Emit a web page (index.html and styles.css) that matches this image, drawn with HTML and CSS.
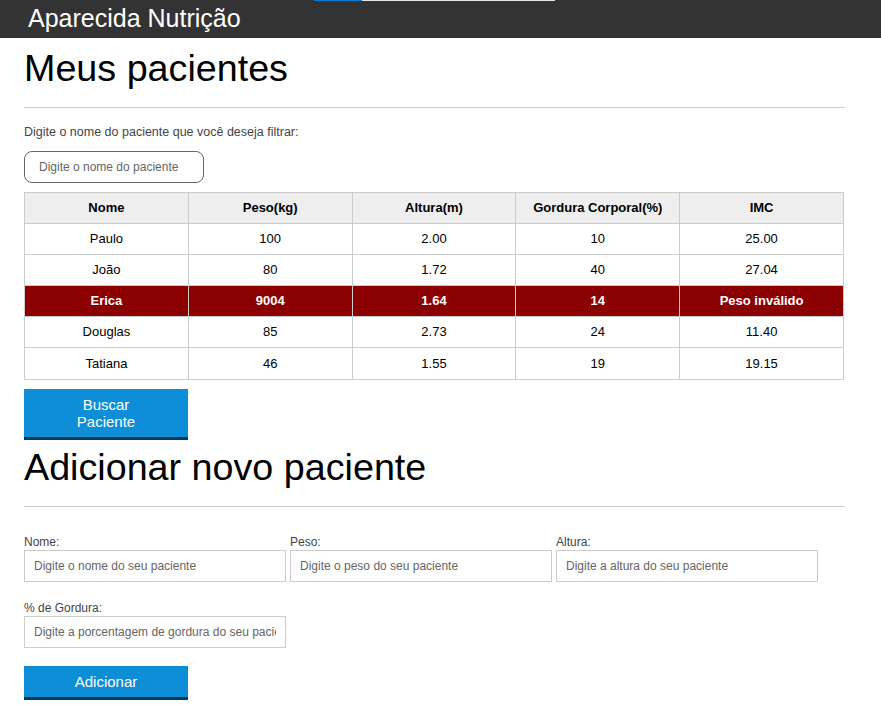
FILE: index.html
```html
<!DOCTYPE html>
<html lang="pt-BR">
<head>
<meta charset="utf-8">
<title>Aparecida Nutrição</title>
<link rel="stylesheet" href="styles.css">
</head>
<body>
<div class="progress"><span class="progress-fill"></span><span class="progress-rest"></span></div>
<header class="topbar">
  <h1 class="brand">Aparecida Nutrição</h1>
</header>
<main class="container">
  <section>
    <h2 class="title">Meus pacientes</h2>
    <hr class="rule">
    <label class="filter-label" for="filtro">Digite o nome do paciente que você deseja filtrar:</label>
    <input id="filtro" class="filter-input" type="text" placeholder="Digite o nome do paciente">
    <table class="patients">
      <thead>
        <tr><th>Nome</th><th>Peso(kg)</th><th>Altura(m)</th><th>Gordura Corporal(%)</th><th>IMC</th></tr>
      </thead>
      <tbody>
        <tr><td>Paulo</td><td>100</td><td>2.00</td><td>10</td><td>25.00</td></tr>
        <tr><td>João</td><td>80</td><td>1.72</td><td>40</td><td>27.04</td></tr>
        <tr class="invalid"><td>Erica</td><td>9004</td><td>1.64</td><td>14</td><td>Peso inválido</td></tr>
        <tr><td>Douglas</td><td>85</td><td>2.73</td><td>24</td><td>11.40</td></tr>
        <tr><td>Tatiana</td><td>46</td><td>1.55</td><td>19</td><td>19.15</td></tr>
      </tbody>
    </table>
    <button class="btn btn-search" type="button">Buscar Paciente</button>
  </section>
  <section>
    <h2 class="title title-add">Adicionar novo paciente</h2>
    <hr class="rule">
    <form class="form">
      <div class="row">
        <div class="field"><label for="nome">Nome:</label><input id="nome" type="text" placeholder="Digite o nome do seu paciente"></div>
        <div class="field"><label for="peso">Peso:</label><input id="peso" type="text" placeholder="Digite o peso do seu paciente"></div>
        <div class="field"><label for="altura">Altura:</label><input id="altura" type="text" placeholder="Digite a altura do seu paciente"></div>
      </div>
      <div class="row row-second">
        <div class="field"><label for="gordura">% de Gordura:</label><input id="gordura" type="text" placeholder="Digite a porcentagem de gordura do seu paciente"></div>
      </div>
      <button class="btn btn-add" type="button">Adicionar</button>
    </form>
  </section>
</main>
</body>
</html>
```
FILE: styles.css
```css
* { box-sizing: border-box; }
html, body { margin: 0; padding: 0; background: #fff; }
body { font-family: "Liberation Sans", Arial, sans-serif; color: #000; }

.progress {
  position: absolute;
  top: 0;
  left: 314px;
  display: flex;
  height: 1px;
  z-index: 2;
}
.progress-fill { width: 48px; background: #0a7ad6; }
.progress-rest { width: 193px; background: #e6e6e6; }

.topbar {
  background: #333;
  height: 38px;
  padding: 0 28px;
}
.brand {
  margin: 0;
  color: #fff;
  font-weight: normal;
  font-size: 25px;
  line-height: 37px;
}

.container {
  width: 820px;
  margin: 0 24px;
}

.title {
  margin: 8px 0 0;
  font-weight: normal;
  font-size: 37.7px;
  line-height: 44px;
}
.title-add { margin-top: 5px; }

.rule {
  border: 0;
  border-top: 1px solid #ccc;
  margin: 17px 0 0;
}

.filter-label {
  display: block;
  margin-top: 17px;
  font-size: 12.5px;
  line-height: 14px;
  color: #444;
}
.filter-input {
  display: block;
  margin-top: 12px;
  width: 180px;
  height: 32px;
  border: 1px solid #666;
  border-radius: 8px;
  padding: 0 14px;
  font-family: inherit;
  font-size: 12px;
}
.filter-input::placeholder { color: #666; }

.patients {
  margin-top: 9px;
  width: 820px;
  border-collapse: collapse;
  table-layout: fixed;
  font-size: 13px;
}
.patients th, .patients td {
  border: 1px solid #ccc;
  height: 31.1px;
  padding: 0 4px;
  text-align: center;
  line-height: 16px;
}
.patients th { background: #eee; font-weight: bold; }
.patients tr.invalid td { background: #8b0000; color: #fff; font-weight: bold; }

.btn {
  display: block;
  width: 164px;
  border: 0;
  border-bottom: 3px solid #003a5c;
  background: #0d8ed6;
  color: #fff;
  font-family: inherit;
  font-size: 15px;
  line-height: 17px;
  padding: 0 30px;
  cursor: pointer;
}
.btn-search { margin-top: 9px; height: 51px; padding-top: 1px; }
.btn-add { margin-top: 18px; height: 34px; }

.form { margin-top: 28px; }
.row { display: flex; gap: 4px; }
.row-second { margin-top: 19px; }
.field { display: flex; flex-direction: column; width: 262px; }
.field label { font-size: 12px; line-height: 14px; color: #444; margin-bottom: 1px; }
.field input {
  height: 32px;
  border: 1px solid #ccc;
  padding: 0 9px;
  font-family: inherit;
  font-size: 12px;
}
.field input::placeholder { color: #666; }
```
